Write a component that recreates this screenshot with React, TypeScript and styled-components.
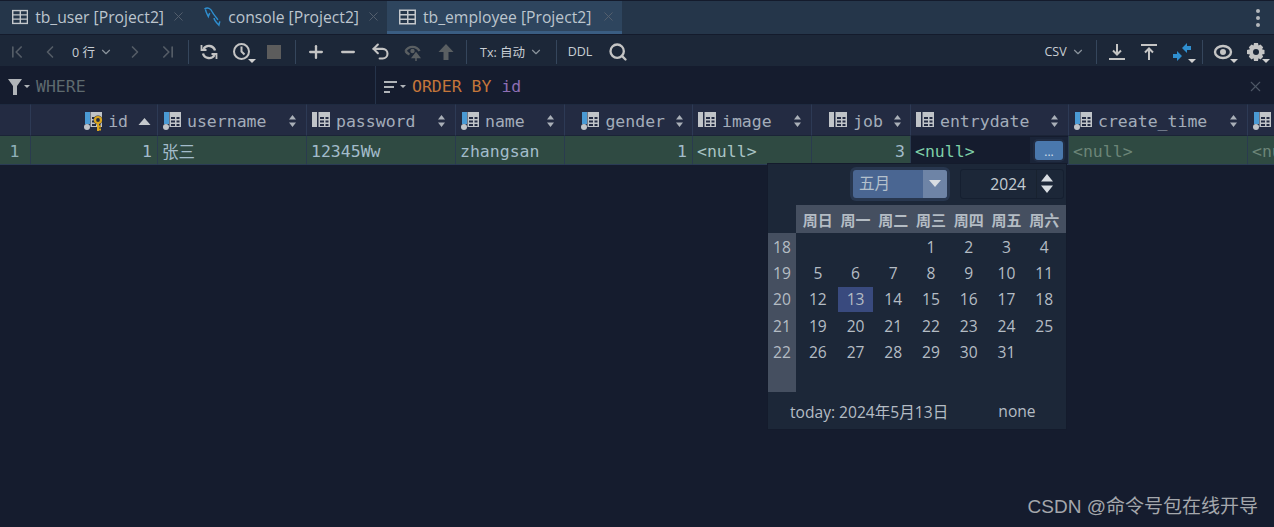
import React from 'react';
import styled, { createGlobalStyle } from 'styled-components';
import { ChevronDown, ChevronFirst, ChevronLast, ChevronLeft, ChevronRight, Minus, Plus, Search, Undo2, X } from 'lucide-react';

const UI_FONT = '"Open Sans", "Noto Sans", "Noto Sans CJK SC", sans-serif';
const MONO_FONT = '"DejaVu Sans Mono", "Noto Sans CJK SC", monospace';

const GlobalStyle = createGlobalStyle`
  html, body { margin: 0; padding: 0; background: #151c2e; }
  * { box-sizing: border-box; }
`;

const COLUMNS = [
  { name: 'id', width: 127, right: true, kind: 'key' },
  { name: 'username', width: 149, kind: 'flag' },
  { name: 'password', width: 149, kind: 'plain' },
  { name: 'name', width: 109, kind: 'flag' },
  { name: 'gender', width: 128, right: true, kind: 'flag' },
  { name: 'image', width: 119, kind: 'plain' },
  { name: 'job', width: 99, right: true, kind: 'plain' },
  { name: 'entrydate', width: 158, kind: 'plain' },
  { name: 'create_time', width: 179, kind: 'flag' },
  { name: 'update_time', width: 190, kind: 'flag' },
];

const gridTemplate = '31px ' + COLUMNS.map((c) => c.width + 'px').join(' ');

const WEEKDAYS = ['周日', '周一', '周二', '周三', '周四', '周五', '周六'];
const WEEK_NUMBERS = [18, 19, 20, 21, 22, ''];
const DAYS = ['', '', '', 1, 2, 3, 4, 5, 6, 7, 8, 9, 10, 11, 12, 13, 14, 15, 16, 17, 18, 19, 20, 21, 22, 23, 24, 25, 26, 27, 28, 29, 30, 31, ''];

const TableIcon = () => (
  <svg width="17" height="16" viewBox="0 0 17 16">
    <rect x="0" y="0.500" width="17" height="15" fill="#c4c8cc" />
    <path d="M1.500 2h6.500v3H1.500zM9.500 2h6v3h-6zM1.500 6.500h6.500v3H1.500zM9.500 6.500h6v3h-6zM1.500 11h6.500v3H1.500zM9.500 11h6v3h-6z" fill="#25364a" />
  </svg>
);

const IconBox = styled.svg`
  flex: none;
`;

const ColumnIcon = ({ kind }: { kind: string }) => (
  <IconBox width="20" height="20" viewBox="0 0 20 20">
    <rect x={kind === 'plain' ? 1 : 2} y="1" width="5" height={kind === 'plain' ? 15 : 12} fill={kind === 'plain' ? '#c0c4c8' : '#4a9ad4'} />
    {kind !== 'plain' && <circle cx="4" cy="16" r="3" fill="#c0c4c8" />}
    <path d="M7.500 1h11.500v15H7.500z" fill="#c0c4c8" />
    <path d="M9 6h4v2H9zM14.500 6h3v2h-3zM9 9.500h4v2H9zM14.500 9.500h3v2h-3zM9 13h4v2H9zM14.500 13h3v2h-3z" fill="#232b42" />
    {kind === 'key' && (
      <g>
        <circle cx="15" cy="9" r="4.500" fill="#232b42" />
        <circle cx="15" cy="9" r="3" fill="none" stroke="#d9a520" strokeWidth="2.200" />
        <path d="M15 12v8M15 15.500h3M15 18.500h3" stroke="#d9a520" strokeWidth="2" />
      </g>
    )}
  </IconBox>
);

const Dolphin = () => (
  <svg width="18" height="22" viewBox="0 0 18 22" fill="none" stroke="#2f8fd0" strokeWidth="1.500">
    <path d="M0.500 2.500C4 0.500 7 2 8.500 5.500c1.500 3 4 5.500 6 8.500" />
    <path d="M1.500 3c0.500 3 2 5.500 3 7.500 0.500-1.500 1-2.500 1.500-3.500" />
    <path d="M10.500 12c0 2.500 2 4 5 7.500l1-4" />
  </svg>
);

const SortArrows = () => (
  <IconBox width="9" height="14" viewBox="0 0 9 14" fill="#aab0b8">
    <path d="M4.500 1 8 5.500H1zM4.500 13 1 8.500h7z" />
  </IconBox>
);

const SortUp = () => (
  <IconBox width="13" height="9" viewBox="0 0 13 9" fill="#c4c8cc">
    <path d="M6.500 1 12.500 8H0.500z" />
  </IconBox>
);

const DropMark = styled.span`
  position: absolute;
  right: 2px;
  bottom: 3px;
  width: 0;
  height: 0;
  border-left: 4px solid transparent;
  border-right: 4px solid transparent;
  border-top: 4px solid #d0d0d0;
`;

const Tabs = styled.div`
  display: flex;
  height: 35px;
  background: #25364a;
  border-top: 1px solid #141b2c;
  border-bottom: 1px solid #141b2c;
  font-family: ${UI_FONT};
  font-size: 15.700px;
  color: #bcc5ce;
`;

const Tab = styled.div<{ $active?: boolean; $width: number }>`
  display: flex;
  align-items: center;
  gap: 7px;
  width: ${(p) => p.$width}px;
  padding: 1px 6px 0 12px;
  background: ${(p) => (p.$active ? '#2e455e' : 'transparent')};
  border-bottom: 3px solid ${(p) => (p.$active ? '#3a5d82' : 'transparent')};
  white-space: nowrap;
`;

const TabClose = styled(X)`
  flex: none;
  margin-left: auto;
  color: #56616f;
`;

const TabSpacer = styled.div`
  flex: 1;
`;

const KebabMenu = styled.div`
  display: flex;
  flex-direction: column;
  justify-content: center;
  gap: 3px;
  width: 32px;
  padding-left: 14px;
`;

const KebabDot = styled.span`
  width: 4px;
  height: 4px;
  border-radius: 50%;
  background: #b4b8bc;
`;

const Toolbar = styled.div`
  display: flex;
  align-items: center;
  height: 31px;
  padding: 2px 2px 0 1px;
  background: #1c2738;
  font-family: ${UI_FONT};
  font-size: 12.500px;
  color: #c8ced4;
`;

const ToolButton = styled.div<{ $color?: string; $gapLeft?: number }>`
  position: relative;
  display: flex;
  align-items: center;
  justify-content: center;
  flex: none;
  width: 32.500px;
  height: 28px;
  margin-left: ${(p) => p.$gapLeft || 0}px;
  color: ${(p) => p.$color || '#c4c4c4'};
`;

const ToolLabel = styled.div<{ $width: number }>`
  display: flex;
  align-items: center;
  justify-content: center;
  flex: none;
  gap: 4px;
  width: ${(p) => p.$width}px;
  white-space: nowrap;
  color: #c8ced4;
`;

const ToolSep = styled.div`
  flex: none;
  width: 1px;
  height: 24px;
  margin: 0 4px;
  background: #35465c;
`;

const ToolSpacer = styled.div`
  flex: 1;
`;

const FilterBar = styled.div`
  display: flex;
  height: 38px;
  background: #151c2e;
  font-family: ${MONO_FONT};
  font-size: 16.500px;
`;

const FilterPane = styled.div<{ $width?: number }>`
  display: flex;
  align-items: center;
  gap: 6px;
  flex: ${(p) => (p.$width ? 'none' : '1')};
  width: ${(p) => (p.$width ? p.$width + 'px' : 'auto')};
  padding: 3px 10px 0 8px;
  border-right: ${(p) => (p.$width ? '1px solid #25334a' : 'none')};
`;

const Placeholder = styled.span`
  color: #5e6a6e;
`;

const Keyword = styled.span`
  color: #c4763a;
`;

const FieldName = styled.span`
  color: #8f6fb4;
`;

const FilterClose = styled(X)`
  margin-left: auto;
  color: #4e5766;
`;

const Body = styled.div`
  position: relative;
  flex: 1;
  overflow: hidden;
  font-family: ${MONO_FONT};
  font-size: 16.500px;
`;

const GridRow = styled.div`
  display: grid;
  grid-template-columns: ${gridTemplate};
`;

const HeaderCell = styled.div<{ $right?: boolean }>`
  display: flex;
  align-items: center;
  gap: 5px;
  height: 32px;
  padding: 2px 9px 0 ${(p) => (p.$right ? 0 : 4)}px;
  background: #232b42;
  border-top: 1px solid #1e2a40;
  border-right: 1px solid #2d3a55;
  border-bottom: 1px solid #1b2437;
  color: #a3adba;
  white-space: nowrap;
  overflow: hidden;
`;

const HeaderFill = styled.span`
  flex: 1;
`;

const HeaderName = styled.span`
  flex: none;
`;

const SortSlot = styled.span<{ $right?: boolean; $up?: boolean }>`
  display: flex;
  flex: none;
  margin-left: ${(p) => (p.$right ? 5 : 0)}px;
  margin-right: ${(p) => (p.$up ? -3 : p.$right ? -1 : 0)}px;
`;

const DataCell = styled.div<{ $right?: boolean; $center?: boolean; $color?: string; $active?: boolean }>`
  display: flex;
  align-items: center;
  justify-content: ${(p) => (p.$center ? 'center' : p.$right ? 'flex-end' : 'flex-start')};
  height: 29px;
  padding: 2px ${(p) => (p.$active ? 0 : 5)}px 0 4px;
  background: ${(p) => (p.$active ? '#151c2e' : '#2f4a42')};
  border-right: 1px solid #2a3b4f;
  border-bottom: 1px solid #2a3b55;
  color: ${(p) => p.$color || '#a3bccb'};
  white-space: nowrap;
  overflow: hidden;
`;

const CellSlot = styled.div`
  display: flex;
  align-items: center;
  justify-content: center;
  width: 38px;
  height: 27px;
  margin-top: -2px;
  margin-left: auto;
  background: #1a2438;
`;

const CellButton = styled.div`
  display: flex;
  align-items: flex-end;
  justify-content: center;
  width: 28px;
  height: 19px;
  border-radius: 3px;
  background: #4a78ad;
  box-shadow: 0 0 0 2px #212c42;
  color: #d5dfe9;
  font-family: ${UI_FONT};
  font-size: 12px;
  line-height: 16px;
`;

const DatePopup = styled.div`
  position: absolute;
  left: 768px;
  top: 60px;
  width: 298px;
  height: 265px;
  background: #1c2738;
  box-shadow: 0 0 0 1px #141b2c;
  font-family: ${UI_FONT};
  font-size: 15.600px;
  color: #b4bcc4;
`;

const PopupTop = styled.div`
  display: flex;
  align-items: center;
  justify-content: flex-end;
  gap: 13px;
  height: 41px;
  padding: 0 2px 2px 0;
`;

const MonthSelect = styled.div`
  display: flex;
  width: 94px;
  height: 28px;
  background: #4a6692;
  border-radius: 3px;
  box-shadow: 0 0 0 3px #28374f;
  color: #b4c0cc;
`;

const MonthValue = styled.div`
  flex: 1;
  padding-left: 6px;
  line-height: 27px;
`;

const MonthArrow = styled.div`
  display: flex;
  align-items: center;
  justify-content: center;
  width: 24px;
  background: #6e84a6;
  border-radius: 0 3px 3px 0;
  &::after {
    content: '';
    border-left: 6px solid transparent;
    border-right: 6px solid transparent;
    border-top: 7px solid #d8dde2;
  }
`;

const YearSpinner = styled.div`
  display: flex;
  align-items: center;
  width: 104px;
  height: 30px;
  background: #1c2738;
  border: 1px solid #151f30;
  border-radius: 3px;
  color: #c4ccd2;
`;

const YearValue = styled.div`
  flex: 1;
  text-align: right;
  padding-right: 10px;
`;

const YearArrows = styled.div`
  display: flex;
  align-items: center;
  justify-content: flex-start;
  width: 27px;
  height: 100%;
  padding-left: 4px;
  border-left: 1px solid #18222f;
`;

const CalendarGrid = styled.div`
  display: grid;
  grid-template-columns: 28px 1fr;
  grid-template-rows: 28px 159px;
`;

const Corner = styled.div``;

const WeekdayRow = styled.div`
  display: grid;
  grid-template-columns: repeat(7, 1fr);
  align-items: center;
  padding: 0 3px 0 3px;
  background: #454f60;
  color: #b4bcc4;
  font-size: 15px;
  font-weight: 700;
  text-align: center;
`;

const WeekColumn = styled.div`
  display: grid;
  grid-auto-rows: 26.200px;
  padding-top: 1px;
  background: #454f60;
`;

const WeekNumber = styled.div`
  display: flex;
  align-items: center;
  justify-content: center;
`;

const DayGrid = styled.div`
  display: grid;
  grid-template-columns: repeat(7, 1fr);
  grid-auto-rows: 26.200px;
  padding: 1px 3px 0 3px;
`;

const Day = styled.div<{ $selected?: boolean }>`
  display: flex;
  align-items: center;
  justify-content: center;
  margin: 1px 1px;
  background: ${(p) => (p.$selected ? '#394a7e' : 'transparent')};
`;

const PopupFooter = styled.div`
  display: flex;
  align-items: center;
  height: 38px;
  padding-left: 22px;
`;

const NoneLink = styled.span`
  margin-left: 50px;
`;

const Watermark = styled.div`
  position: absolute;
  right: 16px;
  bottom: 9px;
  font-family: "Liberation Sans", "Noto Sans CJK SC", sans-serif;
  font-size: 19px;
  color: #a4a7ac;
`;

const Page = styled.div`
  display: flex;
  flex-direction: column;
  width: 1274px;
  height: 527px;
  overflow: hidden;
  background: #151c2e;
`;

const tabs = [
  { label: 'tb_user [Project2]', width: 192, icon: <TableIcon /> },
  { label: 'console [Project2]', width: 195, icon: <Dolphin /> },
  { label: 'tb_employee [Project2]', width: 235, icon: <TableIcon />, active: true },
];

const Caret = () => <DropMark />;

const App: React.FC = () => {
  const cells: Record<string, { text: string; right?: boolean; color?: string }> = {
    id: { text: '1', right: true },
    username: { text: '张三' },
    password: { text: '12345Ww' },
    name: { text: 'zhangsan' },
    gender: { text: '1', right: true },
    image: { text: '<null>', color: '#a9c4c4' },
    job: { text: '3', right: true },
    create_time: { text: '<null>', color: '#6c8578' },
    update_time: { text: '<null>', color: '#6c8578' },
  };

  return (
    <Page>
      <GlobalStyle />
      <Tabs>
        {tabs.map((t) => (
          <Tab key={t.label} $active={t.active} $width={t.width}>
            {t.icon}
            <span>{t.label}</span>
            <TabClose size={15} strokeWidth={1.500} />
          </Tab>
        ))}
        <TabSpacer />
        <KebabMenu>
          <KebabDot />
          <KebabDot />
          <KebabDot />
        </KebabMenu>
      </Tabs>

      <Toolbar>
        <ToolButton $color="#545c66"><ChevronFirst size={20} /></ToolButton>
        <ToolButton $color="#545c66"><ChevronLeft size={20} /></ToolButton>
        <ToolLabel $width={53}>0 行 <ChevronDown size={14} color="#8a939c" /></ToolLabel>
        <ToolButton $color="#545c66"><ChevronRight size={20} /></ToolButton>
        <ToolButton $color="#545c66"><ChevronLast size={20} /></ToolButton>
        <ToolSep />
        <ToolButton>
          <svg width="18" height="18" viewBox="0 0 18 18" fill="none" stroke="#c4c4c4" strokeWidth="2.400">
            <path d="M15 7.500A6.300 6.300 0 0 0 3.500 6M3 10.500A6.300 6.300 0 0 0 14.500 12" />
            <path d="M1.500 2v5h5M16.500 16v-5h-5" strokeWidth="1.800" />
          </svg>
        </ToolButton>
        <ToolButton>
          <svg width="20" height="20" viewBox="0 0 20 20" fill="none" stroke="#c4c4c4" strokeWidth="2">
            <circle cx="9.500" cy="9.500" r="7.500" />
            <path d="M9.500 4.500v5l3 3" />
          </svg>
          <Caret />
        </ToolButton>
        <ToolButton>
          <svg width="14" height="14" viewBox="0 0 14 14"><rect width="14" height="14" fill="#5c5c5c" /></svg>
        </ToolButton>
        <ToolSep />
        <ToolButton><Plus size={20} strokeWidth={2.800} /></ToolButton>
        <ToolButton><Minus size={20} strokeWidth={2.800} /></ToolButton>
        <ToolButton><Undo2 size={21} strokeWidth={2.400} /></ToolButton>
        <ToolButton>
          <svg width="18" height="18" viewBox="0 0 18 18" fill="none" stroke="#5a5f62" strokeWidth="2.400">
            <path d="M1.500 8c3-5.500 11-5.500 14 0" />
            <path d="M1.500 8c1 1.600 2.300 2.800 4 3.500" />
            <circle cx="8.500" cy="8" r="2.200" fill="#5a5f62" stroke="none" />
            <path d="M12 18v-6M8.500 14.500h7L12 10z" fill="#5a5f62" strokeWidth="1.500" />
          </svg>
        </ToolButton>
        <ToolButton>
          <svg width="16" height="18" viewBox="0 0 16 18" fill="#5a5f62"><path d="M8 1 15.500 9h-5v8h-5V9H.5z" /></svg>
        </ToolButton>
        <ToolSep />
        <ToolLabel $width={81}>Tx: 自动 <ChevronDown size={14} color="#8a939c" /></ToolLabel>
        <ToolSep />
        <ToolLabel $width={38}>DDL</ToolLabel>
        <ToolButton $gapLeft={3}><Search size={20} strokeWidth={2.800} /></ToolButton>
        <ToolSpacer />
        <ToolLabel $width={54}>CSV <ChevronDown size={14} color="#8a939c" /></ToolLabel>
        <ToolSep />
        <ToolButton>
          <svg width="16" height="18" viewBox="0 0 16 18" fill="none" stroke="#c4c4c4" strokeWidth="2">
            <path d="M8 1v10M4 7.500l4 4 4-4M0 16h16" />
          </svg>
        </ToolButton>
        <ToolButton>
          <svg width="16" height="18" viewBox="0 0 16 18" fill="none" stroke="#c4c4c4" strokeWidth="2">
            <path d="M0 2h16M8 17V6M4 9.500l4-4 4 4" />
          </svg>
        </ToolButton>
        <ToolButton>
          <svg width="18" height="18" viewBox="0 0 18 18" fill="#2f8fd0">
            <path d="M9 5 14 0V3H18V7H14V10zM9 13 4 18V15H0V11H4V8z" />
          </svg>
          <Caret />
        </ToolButton>
        <ToolSep />
        <ToolButton>
          <svg width="20" height="16" viewBox="0 0 20 16" fill="none" stroke="#c4c4c4" strokeWidth="2.400">
            <ellipse cx="10" cy="8" rx="8" ry="6" />
            <circle cx="10" cy="8" r="1.800" fill="#c4c4c4" />
          </svg>
          <Caret />
        </ToolButton>
        <ToolButton>
          <svg width="18" height="18" viewBox="0 0 18 18">
            <path d="M7 0h4l.5 2.500 2-1 2.700 2.700-1.200 2 2.500.8v4l-2.500.5 1.200 2.300-2.700 2.700-2-1.200L11 18H7l-.5-2.700-2 1.200-2.700-2.700 1.200-2.300L0 11V7l3-.8-1.200-2L4.500 1.500l2 1z" fill="#c4c4c4" />
            <circle cx="9" cy="9" r="3" fill="#1c2738" />
          </svg>
          <Caret />
        </ToolButton>
      </Toolbar>

      <FilterBar>
        <FilterPane $width={376}>
          <svg width="22" height="18" viewBox="0 0 22 18" fill="#b0b4b8">
            <path d="M0 1h14L9 8v9H5V8zM16 7h6l-3 3z" />
          </svg>
          <Placeholder>WHERE</Placeholder>
        </FilterPane>
        <FilterPane>
          <svg width="22" height="14" viewBox="0 0 22 14" fill="#b0b4b8">
            <path d="M0 1h13v2H0zM0 6h10v2H0zM0 11h6v2H0zM16 5h6l-3 3z" />
          </svg>
          <span><Keyword>ORDER BY</Keyword> <FieldName>id</FieldName></span>
          <FilterClose size={17} strokeWidth={1.500} />
        </FilterPane>
      </FilterBar>

      <Body>
        <GridRow>
          <HeaderCell />
          {COLUMNS.map((c) => (
            <HeaderCell key={c.name} $right={c.right}>
              {c.right && <HeaderFill />}
              <ColumnIcon kind={c.kind} />
              <HeaderName>{c.name}</HeaderName>
              {!c.right && <HeaderFill />}
              <SortSlot $right={c.right} $up={c.name === 'id'}>{c.name === 'id' ? <SortUp /> : <SortArrows />}</SortSlot>
            </HeaderCell>
          ))}
        </GridRow>
        <GridRow>
          <DataCell $center $color="#8fb0b8">1</DataCell>
          {COLUMNS.map((c) =>
            c.name === 'entrydate' ? (
              <DataCell key={c.name} $active $color="#7fd0a8">
                {'<null>'}
                <CellSlot>
                  <CellButton>...</CellButton>
                </CellSlot>
              </DataCell>
            ) : (
              <DataCell key={c.name} $right={cells[c.name].right} $color={cells[c.name].color}>
                {cells[c.name].text}
              </DataCell>
            ),
          )}
        </GridRow>

        <DatePopup>
          <PopupTop>
            <MonthSelect>
              <MonthValue>五月</MonthValue>
              <MonthArrow />
            </MonthSelect>
            <YearSpinner>
              <YearValue>2024</YearValue>
              <YearArrows>
                <svg width="12" height="19" viewBox="0 0 12 19" fill="#d8dde2">
                  <path d="M6 0 12 7.500H0zM6 19 0 11.500h12z" />
                </svg>
              </YearArrows>
            </YearSpinner>
          </PopupTop>
          <CalendarGrid>
            <Corner />
            <WeekdayRow>
              {WEEKDAYS.map((d) => (
                <span key={d}>{d}</span>
              ))}
            </WeekdayRow>
            <WeekColumn>
              {WEEK_NUMBERS.map((w, i) => (
                <WeekNumber key={i}>{w}</WeekNumber>
              ))}
            </WeekColumn>
            <DayGrid>
              {DAYS.map((d, i) => (
                <Day key={i} $selected={d === 13}>{d}</Day>
              ))}
            </DayGrid>
          </CalendarGrid>
          <PopupFooter>
            <span>today: 2024年5月13日</span>
            <NoneLink>none</NoneLink>
          </PopupFooter>
        </DatePopup>

        <Watermark>CSDN @命令号包在线开导</Watermark>
      </Body>
    </Page>
  );
};

export default App;
